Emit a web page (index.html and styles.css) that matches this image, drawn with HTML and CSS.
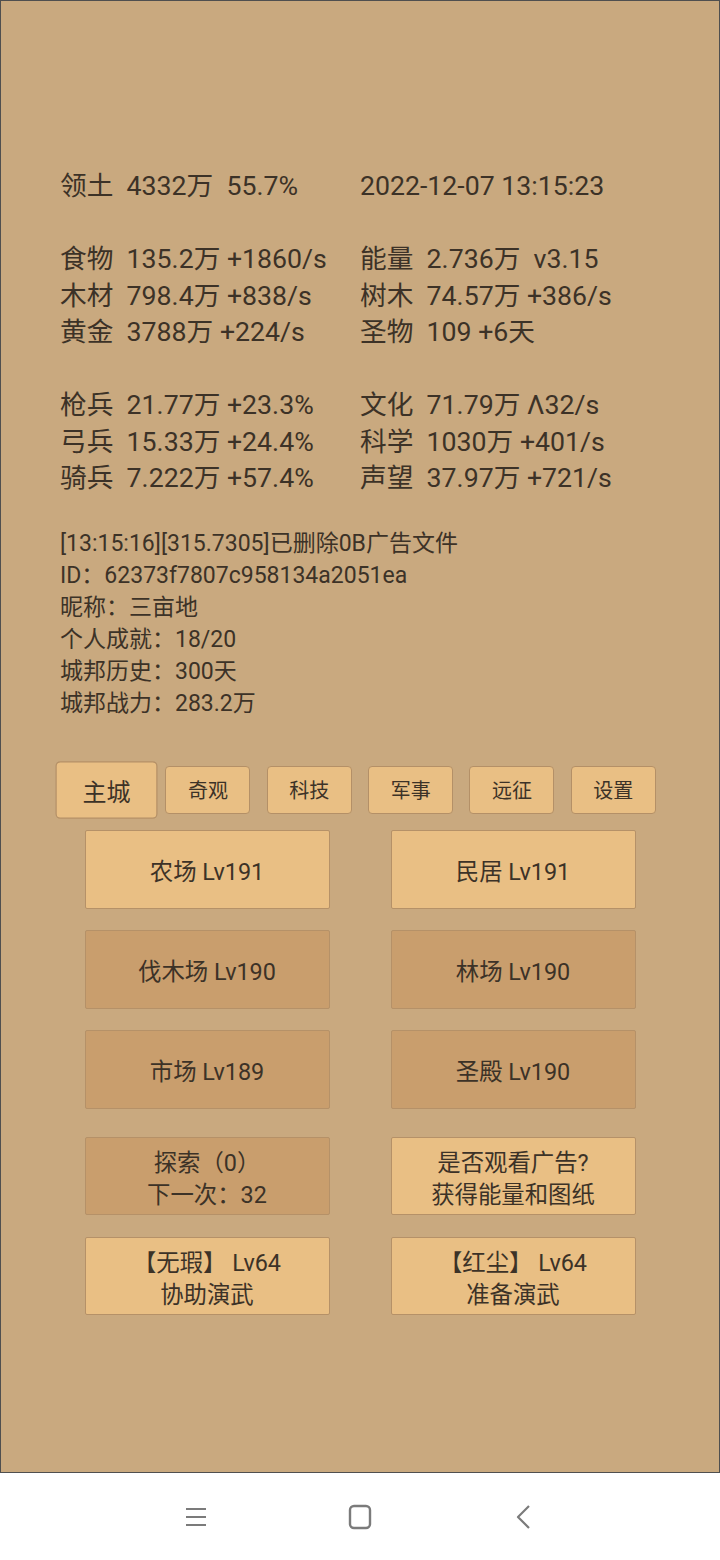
FILE: index.html
```html
<html lang="zh">
<head>
    <meta charset="UTF-8">
    <title>城邦</title>
    <link rel="stylesheet" href="styles.css">
</head>
<body>
    <div class="screen">
        <div class="stats">
            <div class="group">
                <div>领土  4332万  55.7%</div>
                <div>2022-12-07 13:15:23</div>
            </div>
            <div class="group">
                <div>食物  135.2万 +1860/s</div>
                <div>能量  2.736万  v3.15</div>
                <div>木材  798.4万 +838/s</div>
                <div>树木  74.57万 +386/s</div>
                <div>黄金  3788万 +224/s</div>
                <div>圣物  109 +6天</div>
            </div>
            <div class="group">
                <div>枪兵  21.77万 +23.3%</div>
                <div>文化  71.79万 Λ32/s</div>
                <div>弓兵  15.33万 +24.4%</div>
                <div>科学  1030万 +401/s</div>
                <div>骑兵  7.222万 +57.4%</div>
                <div>声望  37.97万 +721/s</div>
            </div>
        </div>

        <div class="log">
            <div>[13:15:16][315.7305]已删除0B广告文件</div>
            <div>ID：62373f7807c958134a2051ea</div>
            <div>昵称：三亩地</div>
            <div>个人成就：18/20</div>
            <div>城邦历史：300天</div>
            <div>城邦战力：283.2万</div>
        </div>

        <div class="tabs">
            <div class="tab active">主城</div>
            <div class="tab">奇观</div>
            <div class="tab">科技</div>
            <div class="tab">军事</div>
            <div class="tab">远征</div>
            <div class="tab">设置</div>
        </div>

        <div class="buildings">
            <div class="btn light">农场 Lv191</div>
            <div class="btn light">民居 Lv191</div>
            <div class="btn dark">伐木场 Lv190</div>
            <div class="btn dark">林场 Lv190</div>
            <div class="btn dark">市场 Lv189</div>
            <div class="btn dark">圣殿 Lv190</div>
        </div>

        <div class="actions">
            <div class="btn dark">探索（0）<br>下一次：32</div>
            <div class="btn light">是否观看广告?<br>获得能量和图纸</div>
            <div class="btn light">【无瑕】 Lv64<br>协助演武</div>
            <div class="btn light">【红尘】 Lv64<br>准备演武</div>
        </div>
    </div>

    <div class="navbar">
        <svg class="nav-icon" width="24" height="26" viewBox="0 0 24 26">
            <path d="M2 5h20M2 13h20M2 21h20" stroke="#7b7b7b" stroke-width="2.2" fill="none"/>
        </svg>
        <svg class="nav-icon" width="24" height="26" viewBox="0 0 24 26">
            <rect x="2" y="2" width="20" height="22" rx="4" stroke="#7b7b7b" stroke-width="2.4" fill="none"/>
        </svg>
        <svg class="nav-icon" width="24" height="26" viewBox="0 0 24 26">
            <path d="M17 2L6 13L17 24" stroke="#7b7b7b" stroke-width="2.2" fill="none" stroke-linejoin="round"/>
        </svg>
    </div>
</body>
</html>
```

FILE: styles.css
```css
body {
    margin: 0;
    padding: 0;
    background: #ffffff;
    font-family: Roboto, "Noto Sans CJK SC", sans-serif;
    color: #3c3227;
}

.screen {
    height: 1473px;
    box-sizing: border-box;
    background: #c9a97f;
    border: 1px solid #4f4f4f;
    padding-top: 167px;
}

.stats {
    padding-left: 59px;
    font-size: 26.7px;
    line-height: 36.5px;
}
.group {
    display: grid;
    grid-template-columns: 300px 300px;
    margin-bottom: 36.5px;
    white-space: pre;
}
.group:last-child {
    margin-bottom: 0;
}

.log {
    padding-left: 59px;
    margin-top: 31px;
    font-size: 23px;
    line-height: 32px;
}

.tabs {
    display: grid;
    grid-template-columns: repeat(6, 1fr);
    justify-items: center;
    margin: 46px 55px 0 55px;
}
.tab {
    width: 85px;
    height: 48px;
    box-sizing: border-box;
    background: #e9bf84;
    border: 1px solid #b49067;
    border-radius: 4px;
    font-size: 20px;
    display: flex;
    align-items: center;
    justify-content: center;
}
.tab.active {
    transform: scale(1.2);
}

.buildings, .actions {
    display: grid;
    grid-template-columns: 245px 245px;
    column-gap: 61px;
    justify-content: center;
}
.buildings {
    margin-top: 16px;
    grid-auto-rows: 79px;
    row-gap: 21px;
}
.actions {
    margin-top: 28px;
    grid-auto-rows: 78px;
    row-gap: 22px;
}

.btn {
    box-sizing: border-box;
    border: 1px solid #b59168;
    border-radius: 2px;
    padding-top: 6px;
    font-size: 23.4px;
    line-height: 32px;
    text-align: center;
    display: flex;
    align-items: center;
    justify-content: center;
}
.btn.light {
    background: #e9bf84;
}
.btn.dark {
    background: #c99e6d;
}

.navbar {
    height: 87px;
    display: flex;
    align-items: center;
    justify-content: center;
    gap: 140px;
}
```
